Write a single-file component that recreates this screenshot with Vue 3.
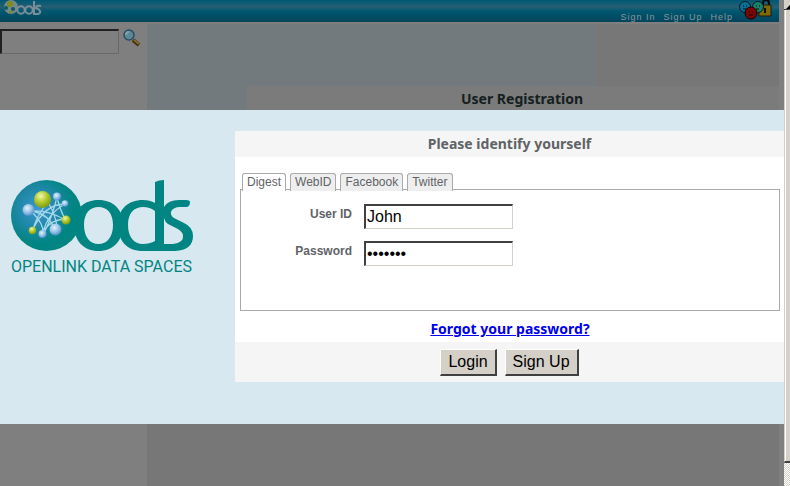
<script setup>
import { ref } from 'vue'

const search = ref('')
const userId = ref('John')
const password = ref('letmein')
const tabs = ['Digest', 'WebID', 'Facebook', 'Twitter']
const active = ref('Digest')
</script>

<template>
  <div class="window">
    <div class="viewport">
      <div class="page">
        <header class="topbar">
          <svg class="mini-logo" width="44" height="18" viewBox="0 0 44 18" role="img" aria-label="ods">
            <circle cx="11" cy="7" r="7" fill="#75888c" />
            <circle cx="10" cy="4" r="3" fill="#7d8b19" />
            <circle cx="6" cy="8" r="2" fill="#0e5a60" />
            <circle cx="13" cy="9" r="2" fill="#0e5a60" />
            <circle cx="11" cy="12" r="1.5" fill="#7d8b19" />
            <g fill="none" stroke="#7c8f98" stroke-width="2">
              <circle cx="21" cy="10" r="3.7" />
              <circle cx="29" cy="10" r="3.7" />
              <path d="M34 1V14H38Q41 13 40 11T36 8Q36 5 41 6" />
            </g>
          </svg>
          <nav class="links">
            <a href="#signin">Sign In</a>
            <a href="#signup">Sign Up</a>
            <a href="#help">Help</a>
          </nav>
          <svg class="faces" width="34" height="20" viewBox="0 0 34 20" aria-hidden="true">
            <path d="M24 6V3q0-3 3-3t3 3v3" fill="none" stroke="#080808" stroke-width="2" />
            <path d="M20 5h12v11H20z" fill="#80690a" stroke="#211b05" />
            <path d="M26 8v5" stroke="#111" stroke-width="2" />
            <circle cx="6" cy="7" r="5.5" fill="#087096" stroke="#071820" />
            <circle cx="19" cy="7" r="5.5" fill="#168269" stroke="#071820" />
            <circle cx="12" cy="13" r="6" fill="#7b0505" stroke="#160303" />
            <path d="M4 6h1m2 0h1M17 6h1m2 0h1M10 12h1m2 0h1M10 15h4M4 9h4M17 9h3" stroke="#08090a" />
          </svg>
        </header>
        <div class="content">
          <aside class="sidebar">
            <form class="search" @submit.prevent>
              <input v-model="search" class="field" type="text" aria-label="Search" />
              <button class="find" type="submit" aria-label="Find">
                <svg width="18" height="18" viewBox="0 0 18 18">
                  <path d="M10 11l6 5" stroke="#44300f" stroke-width="4" />
                  <path d="M11 11l5 4" stroke="#8a682c" stroke-width="2" />
                  <circle cx="6" cy="6" r="5" fill="#5c8796" stroke="#294d65" stroke-width="1.5" />
                  <path d="M3 6q0-3 3-3" fill="none" stroke="#83a2aa" stroke-width="2" />
                </svg>
              </button>
            </form>
          </aside>
          <main class="main">
            <h1 class="registration">User Registration</h1>
          </main>
        </div>
      </div>

      <section class="dialog" role="dialog" aria-label="Please identify yourself">
        <div class="brand">
          <svg width="184" height="96" viewBox="0 0 184 96" role="img" aria-label="OpenLink Data Spaces">
            <defs>
              <radialGradient id="ball" cx="38%" cy="40%" r="55%">
                <stop offset="0" stop-color="#3c97cf" />
                <stop offset="0.5" stop-color="#2088a8" />
                <stop offset="0.9" stop-color="#008582" />
              </radialGradient>
              <radialGradient id="green" cx="40%" cy="30%" r="70%">
                <stop offset="0" stop-color="#f0f7b9" />
                <stop offset="0.5" stop-color="#b5cc2d" />
                <stop offset="1" stop-color="#7c9b13" />
              </radialGradient>
              <radialGradient id="blue" cx="40%" cy="35%" r="65%">
                <stop offset="0" stop-color="#e2f2fb" />
                <stop offset="0.6" stop-color="#91c1e5" />
                <stop offset="1" stop-color="#4d90c7" />
              </radialGradient>
            </defs>
            <circle cx="35.5" cy="35.5" r="35.5" fill="url(#ball)" />
            <g fill="none" stroke="#a6d8ec" stroke-width="1.3">
              <path d="M20 31Q38 30 54 40M22 31Q38 35 43 48M38 24Q44 34 46 46M33 27Q24 40 22 50M46 17Q42 35 33 53M46 18Q50 32 54 39M54 24Q34 24 22 49M54 24Q36 34 32 53M54 39Q38 40 32 53M21 32Q33 44 32 53" />
            </g>
            <g fill="url(#blue)">
              <circle cx="17.5" cy="30" r="6" /><circle cx="46" cy="16.5" r="4" />
              <circle cx="54" cy="23.5" r="3.3" /><circle cx="31.5" cy="54" r="4" /><circle cx="44.5" cy="49.5" r="6" />
            </g>
            <g fill="url(#green)">
              <circle cx="31.5" cy="19.5" r="8.5" /><circle cx="55" cy="40" r="4.5" /><circle cx="21.5" cy="50.5" r="3.8" />
            </g>
            <g fill="#008582" fill-rule="evenodd">
              <path d="M87.5 20C102 20 112 29 112 45S102 71 87.5 71S63 61 63 45S73 20 87.5 20ZM87.5 27C79 27 73 33 73 45S79 64 87.5 64S102 57 102 45S96 27 87.5 27Z" />
              <path d="M144 2Q148 0 153 0V27Q157 20 168 20H175Q179 20 179 22Q179 27 175 27H169C160 27 157 34 163 38L173 43Q182 47 182 56Q182 70 164 71H132C116 71 107 61 107 45S117 20 132 20Q139 20 144 23ZM144 31Q139 27 132 27C123 27 117 33 117 45S123 64 132 64Q139 64 144 61ZM153 38V64H162Q173 63 172 55Q171 51 165 48L157 44Q154 42 153 38Z" />
            </g>
            <text x="0" y="92" class="brand-text">OPENLINK DATA SPACES</text>
          </svg>
        </div>
        <form class="login" @submit.prevent>
          <h2 class="title">Please identify yourself</h2>
          <div class="body">
            <div class="tabs" role="tablist">
              <button
                v-for="tab in tabs" :key="tab" type="button" role="tab" class="tab"
                :class="{ active: tab === active }" :aria-selected="tab === active" @click="active = tab"
              >{{ tab }}</button>
            </div>
            <div class="panel">
              <div class="row">
                <label for="uid">User ID</label>
                <input id="uid" v-model="userId" class="field" type="text" />
              </div>
              <div class="row">
                <label for="pwd">Password</label>
                <input id="pwd" v-model="password" class="field" type="password" />
              </div>
            </div>
            <a class="forgot" href="#forgot">Forgot your password?</a>
          </div>
          <div class="actions">
            <button class="btn" type="submit">Login</button>
            <button class="btn" type="button">Sign Up</button>
          </div>
        </form>
      </section>
    </div>
    <div class="scrollbar" aria-hidden="true">
      <div class="up"><svg width="6" height="10" viewBox="0 0 6 10"><path d="M2 5h4V1z" fill="#000" /></svg></div>
      <div class="thumb"></div>
      <div class="track"></div>
    </div>
  </div>
</template>

<style>
body { overflow: hidden; }
</style>

<style scoped>
* { box-sizing: border-box; }
.window {
  display: flex;
  height: 100vh;
  font-family: "Liberation Sans", Arial, sans-serif;
}
.viewport {
  position: relative;
  flex: 1;
  min-width: 0;
  background: #7f7f7f;
}
.page {
  height: 100%;
  margin-right: 5px;
  display: flex;
  flex-direction: column;
}
.topbar {
  display: flex;
  height: 22px;
  flex: none;
  background: linear-gradient(#005873, #265f74 7px, #005770 11px, #00445a 22px);
}
.mini-logo { margin-right: auto; }
.links {
  display: flex;
  gap: 8px;
  padding: 11px 6px 0 0;
}
.links a {
  font-size: 9px;
  line-height: 12px;
  letter-spacing: 1px;
  color: #8a979d;
  text-decoration: none;
}
.faces { margin-right: 6px; }
.content {
  display: flex;
  flex: 1;
  margin-top: 2px;
  background: #777;
}
.sidebar {
  width: 147px;
  background: #7f7f7f;
}
.search {
  display: flex;
  gap: 4px;
  padding-top: 5px;
}
.field {
  height: 25px;
  padding: 0 1px;
  border: 2px solid;
  border-color: #404040 #d4d0c8 #d4d0c8 #404040;
  border-right-width: 1px;
  border-bottom-width: 1px;
  outline: 0;
  background: #fff;
  color: #000;
  font: 16px/22px "Liberation Sans", Arial, sans-serif;
}
.search .field {
  width: 119px;
  background: #7f7f7f;
  border-color: #202020 #6a6864 #6a6864 #202020;
}
.find {
  align-self: flex-start;
  height: 18px;
  padding: 0;
  border: 0;
  background: none;
}
.main {
  flex: 1;
  padding: 62px 0 0 100px;
  background: linear-gradient(#737a7e, #737a7e) 0 0 / 449px 100px no-repeat;
}
.registration {
  margin: 0;
  padding-left: 18px;
  background: #7b7b7b;
  color: #142020;
  text-align: center;
  font: bold 14px/26px "Noto Sans", sans-serif;
}
.dialog {
  position: absolute;
  top: 110px;
  left: 0;
  right: 0;
  display: flex;
  padding: 21px 0 42px;
  background: #d8e8f0;
}
.brand {
  width: 235px;
  padding: 49px 0 0 11px;
}
.brand-text {
  font: 16px Roboto, sans-serif;
  fill: #008582;
}
.login {
  flex: 1;
  background: #fff;
}
.title {
  margin: 0;
  background: #f5f5f5;
  color: #606366;
  text-align: center;
  font: bold 14px/26px "Noto Sans", sans-serif;
}
.body {
  display: flex;
  flex-direction: column;
  padding: 16px 4px 0 5px;
}
.tabs {
  position: relative;
  display: flex;
  gap: 4px;
  padding-left: 2px;
  margin-bottom: -2px;
}
.tab {
  height: 18px;
  padding: 0 4px;
  border: 1px solid #aaa;
  border-bottom: 0;
  border-radius: 3px 3px 0 0;
  background: #eee;
  color: #606366;
  font: 12px/17px "Liberation Sans", Arial, sans-serif;
}
.tab.active { background: #fff; }
.panel {
  display: flex;
  flex-direction: column;
  gap: 12px;
  height: 122px;
  padding-top: 14px;
  border: 1px solid #aaa;
}
.row {
  display: flex;
  gap: 12px;
}
.row label {
  width: 111px;
  text-align: right;
  color: #606366;
  font-size: 12px;
  line-height: 20px;
  font-weight: bold;
}
.row .field { width: 149px; }
.forgot {
  align-self: center;
  padding: 8px 0 4px;
  color: #00e;
  font: bold 14px/19px "Noto Sans", sans-serif;
}
.actions {
  display: flex;
  justify-content: center;
  gap: 8px;
  padding: 7px 0 6px;
  background: #f5f5f5;
}
.btn {
  height: 27px;
  padding: 0 7px;
  border: 2px solid;
  border-color: #fff #404040 #404040 #fff;
  border-top-width: 1px;
  border-left-width: 1px;
  background: #d4d0c8;
  color: #000;
  font: 16px/24px "Liberation Sans", Arial, sans-serif;
}
.scrollbar {
  display: flex;
  flex-direction: column;
  width: 6px;
  background: #d4d0c8;
}
.up {
  height: 10px;
  border-bottom: 1px solid #404040;
}
.thumb {
  flex: 1;
  border-left: 1px solid #d4d0c8;
  border-bottom: 2px solid #404040;
  box-shadow: inset 1px 0 #fff;
}
.track {
  height: 23px;
  background: repeating-conic-gradient(#fff 0 25%, #d4d0c8 0 50%) 0 0 / 2px 2px;
}
</style>
